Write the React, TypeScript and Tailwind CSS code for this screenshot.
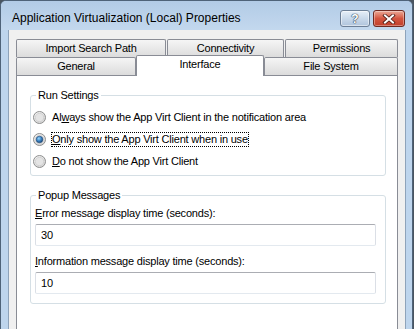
import React from "react";

function Radio({ checked }: { checked?: boolean }) {
  return (
    <svg width="13" height="13" viewBox="0 0 13 13" className="shrink-0">
      <defs>
        <radialGradient id="radioFill" cx="0.4" cy="0.35" r="0.75">
          <stop offset="0" stopColor="#ffffff" />
          <stop offset="1" stopColor="#cfcfcf" />
        </radialGradient>
        <radialGradient id="radioDot" cx="0.4" cy="0.35" r="0.7">
          <stop offset="0" stopColor="#9ad8ff" />
          <stop offset="0.5" stopColor="#3d86c6" />
          <stop offset="1" stopColor="#173f6e" />
        </radialGradient>
      </defs>
      <circle cx="6.5" cy="6.5" r="6" fill="url(#radioFill)" stroke="#8e8f8f" strokeWidth="1" />
      <circle cx="6.5" cy="6.5" r="4.2" fill="#e4e4e4" stroke="#c4c4c4" strokeWidth="0.6" />
      {checked && <circle cx="6.5" cy="6.5" r="3.3" fill="url(#radioDot)" stroke="#1d4a7a" strokeWidth="0.6" />}
    </svg>
  );
}

const tabClass =
  "h-full flex items-center justify-center border border-b-0 border-[#898c95] rounded-t-[2px] bg-gradient-to-b from-[#f5f5f5] to-[#dcdcdc] text-[11px] tracking-[-0.2px]";

export default function App() {
  return (
    <div className="w-[414px] h-[329px] overflow-hidden bg-[#4a5561] font-['Liberation_Sans',Arial,sans-serif] text-black">
      <div className="w-[413px] h-[345px] rounded-t-[6px] border border-[#4f6379] bg-[#bed5ed] flex flex-col">
        {/* title bar */}
        <div className="h-[29px] shrink-0 flex items-start pl-[11px] pr-[7px] rounded-t-[5px] bg-gradient-to-b from-[#b2cbe6] to-[#c3d8ee]">
          <span className="mt-[9px] text-[12px] leading-[16px]">Application Virtualization (Local) Properties</span>
          <div className="ml-auto mt-[9px] flex gap-[3px]">
            <div className="w-[30px] h-[17px] rounded-[3px] border border-[#6c7f96] bg-gradient-to-b from-[#e6eff8] via-[#c9d9ea] to-[#afc4dc] flex items-center justify-center shadow-[inset_0_0_0_1px_rgba(255,255,255,0.5)]">
              <span className="text-[12px] leading-[12px] font-bold text-white [text-shadow:0_0_1px_#2c3e55,0_0_1px_#2c3e55,0_0_1px_#2c3e55]">?</span>
            </div>
            <div className="w-[32px] h-[17px] rounded-[3px] border border-[#6e2a22] bg-gradient-to-b from-[#eaa897] via-[#d35540] to-[#c13f2b] flex items-center justify-center shadow-[inset_0_0_0_1px_rgba(255,255,255,0.35)]">
              <svg width="14" height="10" viewBox="0 0 14 10">
                <path d="M3 1.5 L11 8.5 M11 1.5 L3 8.5" stroke="#4a1a14" strokeWidth="3.6" strokeLinecap="square" />
                <path d="M3 1.5 L11 8.5 M11 1.5 L3 8.5" stroke="#ffffff" strokeWidth="2" strokeLinecap="square" />
              </svg>
            </div>
          </div>
        </div>

        {/* client area */}
        <div className="ml-[7px] mr-[6px] flex-1 flex flex-col bg-[#f0f0f0] border-x border-[#8ea3ba] pt-[9px] pl-[7px] pr-[7px]">
          {/* back tab row */}
          <div className="flex gap-px h-[18px]">
            <div className={tabClass + " w-[150px]"}>Import Search Path</div>
            <div className={tabClass + " w-[117px]"}>Connectivity</div>
            <div className={tabClass + " flex-1"}>Permissions</div>
          </div>
          {/* front tab row */}
          <div className="flex h-[18px] items-end">
            <div className={tabClass + " w-[120px]"}>General</div>
            <div className="relative z-10 w-[128px] h-[21px] -mb-px pb-[3px] flex items-center justify-center bg-white border border-b-0 border-[#898c95] rounded-t-[2px] text-[11px] tracking-[-0.2px]">
              Interface
            </div>
            <div className={tabClass + " flex-1"}>File System</div>
          </div>

          {/* tab page */}
          <div className="flex-1 bg-white border border-[#898c95] pt-[12px] pl-[13px] pr-[11px] text-[11px] tracking-[-0.2px]">
            <fieldset className="border border-[#d5dfe5] rounded-[3px]">
              <legend className="ml-[5px] px-[2px] leading-[14px]">Run Settings</legend>
              <div className="pt-[4px] pb-[3px] pl-[2px] flex flex-col">
                <label className="h-[22px] flex items-center gap-[5px]">
                  <Radio />
                  <span className="border border-transparent leading-[13px]">
                    Al<u>w</u>ays show the App Virt Client in the notification area
                  </span>
                </label>
                <label className="h-[22px] flex items-center gap-[5px]">
                  <Radio checked />
                  <span className="border border-dotted border-black leading-[13px]">
                    <u>O</u>nly show the App Virt Client when in use
                  </span>
                </label>
                <label className="h-[22px] flex items-center gap-[5px]">
                  <Radio />
                  <span className="border border-transparent leading-[13px]">
                    <u>D</u>o not show the App Virt Client
                  </span>
                </label>
              </div>
            </fieldset>

            <fieldset className="mt-[12px] border border-[#d5dfe5] rounded-[3px]">
              <legend className="ml-[5px] px-[2px] leading-[14px]">Popup Messages</legend>
              <div className="pt-[5px] pb-[9px] pl-[4px] pr-[9px] flex flex-col">
                <div className="leading-[13px] mb-[4px]">
                  <u>E</u>rror message display time (seconds):
                </div>
                <input
                  readOnly
                  value="30"
                  className="w-full h-[22px] pl-[5px] rounded-[2px] border border-t-[#abadb3] border-l-[#dbdfe6] border-r-[#dbdfe6] border-b-[#e3e9ef] bg-white outline-none"
                />
                <div className="leading-[13px] mt-[9px] mb-[4px]">
                  <u>I</u>nformation message display time (seconds):
                </div>
                <input
                  readOnly
                  value="10"
                  className="w-full h-[22px] pl-[5px] rounded-[2px] border border-t-[#abadb3] border-l-[#dbdfe6] border-r-[#dbdfe6] border-b-[#e3e9ef] bg-white outline-none"
                />
              </div>
            </fieldset>
          </div>
        </div>
      </div>
    </div>
  );
}
